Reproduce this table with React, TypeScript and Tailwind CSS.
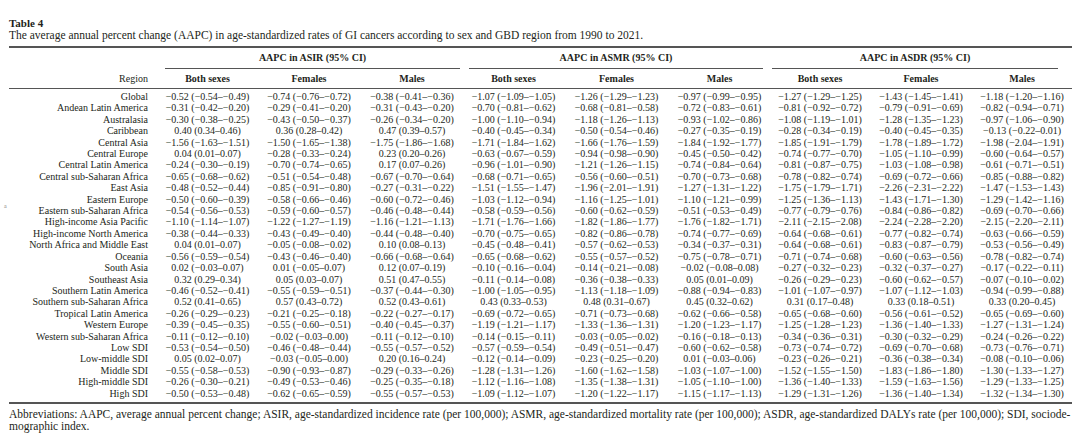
import React from "react";

const rows: [string, string][] = [
  ["Global", "-0.52 -0.54 -0.49 -0.74 -0.76 -0.72 -0.38 -0.41 -0.36 -1.07 -1.09 -1.05 -1.26 -1.29 -1.23 -0.97 -0.99 -0.95 -1.27 -1.29 -1.25 -1.43 -1.45 -1.41 -1.18 -1.20 -1.16"],
  ["Andean Latin America", "-0.31 -0.42 -0.20 -0.29 -0.41 -0.20 -0.31 -0.43 -0.20 -0.70 -0.81 -0.62 -0.68 -0.81 -0.58 -0.72 -0.83 -0.61 -0.81 -0.92 -0.72 -0.79 -0.91 -0.69 -0.82 -0.94 -0.71"],
  ["Australasia", "-0.30 -0.38 -0.25 -0.43 -0.50 -0.37 -0.26 -0.34 -0.20 -1.00 -1.10 -0.94 -1.18 -1.26 -1.13 -0.93 -1.02 -0.86 -1.08 -1.19 -1.01 -1.28 -1.35 -1.23 -0.97 -1.06 -0.90"],
  ["Caribbean", "0.40 0.34 0.46 0.36 0.28 0.42 0.47 0.39 0.57 -0.40 -0.45 -0.34 -0.50 -0.54 -0.46 -0.27 -0.35 -0.19 -0.28 -0.34 -0.19 -0.40 -0.45 -0.35 -0.13 -0.22 0.01"],
  ["Central Asia", "-1.56 -1.63 -1.51 -1.50 -1.65 -1.38 -1.75 -1.86 -1.68 -1.71 -1.84 -1.62 -1.66 -1.76 -1.59 -1.84 -1.92 -1.77 -1.85 -1.91 -1.79 -1.78 -1.89 -1.72 -1.98 -2.04 -1.91"],
  ["Central Europe", "0.04 0.01 0.07 -0.28 -0.33 -0.24 0.23 0.20 0.26 -0.63 -0.67 -0.59 -0.94 -0.98 -0.90 -0.45 -0.50 -0.42 -0.74 -0.77 -0.70 -1.05 -1.10 -0.99 -0.60 -0.64 -0.57"],
  ["Central Latin America", "-0.24 -0.30 -0.19 -0.70 -0.74 -0.65 0.17 0.07 0.26 -0.96 -1.01 -0.90 -1.21 -1.26 -1.15 -0.74 -0.84 -0.64 -0.81 -0.87 -0.75 -1.03 -1.08 -0.98 -0.61 -0.71 -0.51"],
  ["Central sub-Saharan Africa", "-0.65 -0.68 -0.62 -0.51 -0.54 -0.48 -0.67 -0.70 -0.64 -0.68 -0.71 -0.65 -0.56 -0.60 -0.51 -0.70 -0.73 -0.68 -0.78 -0.82 -0.74 -0.69 -0.72 -0.66 -0.85 -0.88 -0.82"],
  ["East Asia", "-0.48 -0.52 -0.44 -0.85 -0.91 -0.80 -0.27 -0.31 -0.22 -1.51 -1.55 -1.47 -1.96 -2.01 -1.91 -1.27 -1.31 -1.22 -1.75 -1.79 -1.71 -2.26 -2.31 -2.22 -1.47 -1.53 -1.43"],
  ["Eastern Europe", "-0.50 -0.60 -0.39 -0.58 -0.66 -0.46 -0.60 -0.72 -0.46 -1.03 -1.12 -0.94 -1.16 -1.25 -1.01 -1.10 -1.21 -0.99 -1.25 -1.36 -1.13 -1.43 -1.71 -1.30 -1.29 -1.42 -1.16"],
  ["Eastern sub-Saharan Africa", "-0.54 -0.56 -0.53 -0.59 -0.60 -0.57 -0.46 -0.48 -0.44 -0.58 -0.59 -0.56 -0.60 -0.62 -0.59 -0.51 -0.53 -0.49 -0.77 -0.79 -0.76 -0.84 -0.86 -0.82 -0.69 -0.70 -0.66"],
  ["High-income Asia Pacific", "-1.10 -1.14 -1.07 -1.22 -1.27 -1.19 -1.16 -1.21 -1.13 -1.71 -1.76 -1.66 -1.82 -1.86 -1.77 -1.76 -1.82 -1.71 -2.11 -2.15 -2.08 -2.24 -2.28 -2.20 -2.15 -2.20 -2.11"],
  ["High-income North America", "-0.38 -0.44 -0.33 -0.43 -0.49 -0.40 -0.44 -0.48 -0.40 -0.70 -0.75 -0.65 -0.82 -0.86 -0.78 -0.74 -0.77 -0.69 -0.64 -0.68 -0.61 -0.77 -0.82 -0.74 -0.63 -0.66 -0.59"],
  ["North Africa and Middle East", "0.04 0.01 0.07 -0.05 -0.08 -0.02 0.10 0.08 0.13 -0.45 -0.48 -0.41 -0.57 -0.62 -0.53 -0.34 -0.37 -0.31 -0.64 -0.68 -0.61 -0.83 -0.87 -0.79 -0.53 -0.56 -0.49"],
  ["Oceania", "-0.56 -0.59 -0.54 -0.43 -0.46 -0.40 -0.66 -0.68 -0.64 -0.65 -0.68 -0.62 -0.55 -0.57 -0.52 -0.75 -0.78 -0.71 -0.71 -0.74 -0.68 -0.60 -0.63 -0.56 -0.78 -0.82 -0.74"],
  ["South Asia", "0.02 -0.03 0.07 0.01 -0.05 0.07 0.12 0.07 0.19 -0.10 -0.16 -0.04 -0.14 -0.21 -0.08 -0.02 -0.08 0.08 -0.27 -0.32 -0.23 -0.32 -0.37 -0.27 -0.17 -0.22 -0.11"],
  ["Southeast Asia", "0.32 0.29 0.34 0.05 0.03 0.07 0.51 0.47 0.55 -0.11 -0.14 -0.08 -0.36 -0.38 -0.33 0.05 0.01 0.09 -0.26 -0.29 -0.23 -0.60 -0.62 -0.57 -0.07 -0.10 -0.02"],
  ["Southern Latin America", "-0.46 -0.52 -0.41 -0.55 -0.59 -0.51 -0.37 -0.44 -0.30 -1.00 -1.05 -0.95 -1.13 -1.18 -1.09 -0.88 -0.94 -0.83 -1.01 -1.07 -0.97 -1.07 -1.12 -1.03 -0.94 -0.99 -0.88"],
  ["Southern sub-Saharan Africa", "0.52 0.41 0.65 0.57 0.43 0.72 0.52 0.43 0.61 0.43 0.33 0.53 0.48 0.31 0.67 0.45 0.32 0.62 0.31 0.17 0.48 0.33 0.18 0.51 0.33 0.20 0.45"],
  ["Tropical Latin America", "-0.26 -0.29 -0.23 -0.21 -0.25 -0.18 -0.22 -0.27 -0.17 -0.69 -0.72 -0.65 -0.71 -0.73 -0.68 -0.62 -0.66 -0.58 -0.65 -0.68 -0.60 -0.56 -0.61 -0.52 -0.65 -0.69 -0.60"],
  ["Western Europe", "-0.39 -0.45 -0.35 -0.55 -0.60 -0.51 -0.40 -0.45 -0.37 -1.19 -1.21 -1.17 -1.33 -1.36 -1.31 -1.20 -1.23 -1.17 -1.25 -1.28 -1.23 -1.36 -1.40 -1.33 -1.27 -1.31 -1.24"],
  ["Western sub-Saharan Africa", "-0.11 -0.12 -0.10 -0.02 -0.03 0.00 -0.11 -0.12 -0.10 -0.14 -0.15 -0.11 -0.03 -0.05 -0.02 -0.16 -0.18 -0.13 -0.34 -0.36 -0.31 -0.30 -0.32 -0.29 -0.24 -0.26 -0.22"],
  ["Low SDI", "-0.53 -0.54 -0.50 -0.46 -0.48 -0.44 -0.55 -0.57 -0.52 -0.57 -0.59 -0.54 -0.49 -0.51 -0.47 -0.60 -0.62 -0.58 -0.73 -0.74 -0.72 -0.69 -0.70 -0.68 -0.73 -0.76 -0.71"],
  ["Low-middle SDI", "0.05 0.02 0.07 -0.03 -0.05 0.00 0.20 0.16 0.24 -0.12 -0.14 -0.09 -0.23 -0.25 -0.20 0.01 -0.03 0.06 -0.23 -0.26 -0.21 -0.36 -0.38 -0.34 -0.08 -0.10 -0.06"],
  ["Middle SDI", "-0.55 -0.58 -0.53 -0.90 -0.93 -0.87 -0.29 -0.33 -0.26 -1.28 -1.31 -1.26 -1.60 -1.62 -1.58 -1.03 -1.07 -1.00 -1.52 -1.55 -1.50 -1.83 -1.86 -1.80 -1.30 -1.33 -1.27"],
  ["High-middle SDI", "-0.26 -0.30 -0.21 -0.49 -0.53 -0.46 -0.25 -0.35 -0.18 -1.12 -1.16 -1.08 -1.35 -1.38 -1.31 -1.05 -1.10 -1.00 -1.36 -1.40 -1.33 -1.59 -1.63 -1.56 -1.29 -1.33 -1.25"],
  ["High SDI", "-0.50 -0.53 -0.48 -0.62 -0.65 -0.59 -0.55 -0.57 -0.53 -1.09 -1.12 -1.07 -1.20 -1.22 -1.17 -1.15 -1.17 -1.13 -1.29 -1.31 -1.26 -1.36 -1.40 -1.34 -1.32 -1.34 -1.30"],
];

const m = (s: string) => (s.startsWith("-") ? "\u2212" + s.slice(1) : s);

function cells(data: string): string[] {
  const v = data.split(" ");
  const out: string[] = [];
  for (let i = 0; i < v.length; i += 3) {
    out.push(`${m(v[i])} (${m(v[i + 1])}\u2013${m(v[i + 2])})`);
  }
  return out;
}

const sub = ["Both sexes", "Females", "Males"];

export default function App() {
  return (
    <div className="relative w-[1080px] h-[444px] overflow-hidden bg-white pl-[9px] pr-[8px] pt-[17px] font-['Liberation_Serif',serif] text-[#231f20]">
      <span className="absolute left-[4px] top-[202px] text-[6px] leading-[8px] text-[#888]">a</span>
      <div className="text-[11px] font-bold leading-[12px]">Table 4</div>
      <div className="text-[11.5px] leading-[12px] whitespace-nowrap">
        The average annual percent change (AAPC) in age-standardized rates of GI cancers according to sex and GBD region from 1990 to 2021.
      </div>
      <div className="mt-[5px] border-y-2 border-[#555]">
        <table className="w-full table-fixed border-separate border-spacing-0 text-[10px]">
          <colgroup>
            <col className="w-[149px]" />
            <col className="w-[99px]" />
            <col className="w-[104px]" />
            <col className="w-[102px]" />
            <col className="w-[101px]" />
            <col className="w-[105px]" />
            <col className="w-[101px]" />
            <col className="w-[100px]" />
            <col className="w-[102px]" />
            <col />
          </colgroup>
          <thead>
            <tr>
              <th className="p-0" />
              <th colSpan={3} className="p-0 pt-[4px] font-bold">
                <div className="ml-[7px] mr-[3px] border-b border-[#555] pb-[4px] leading-[12px]">AAPC in ASIR (95% CI)</div>
              </th>
              <th colSpan={3} className="p-0 pt-[4px] font-bold">
                <div className="ml-[6px] mr-[7px] border-b border-[#555] pb-[4px] leading-[12px]">AAPC in ASMR (95% CI)</div>
              </th>
              <th colSpan={3} className="p-0 pt-[4px] font-bold">
                <div className="ml-[2px] mr-[14px] border-b border-[#555] pb-[4px] leading-[12px]">AAPC in ASDR (95% CI)</div>
              </th>
            </tr>
            <tr>
              <th className="border-b-[1.5px] border-[#555] p-0 pb-[3px] pt-[4px] pr-[10px] text-right font-normal leading-[12px]">
                Region
              </th>
              {[0, 1, 2].flatMap((g) =>
                sub.map((s) => (
                  <th key={g + s} className="border-b-[1.5px] border-[#555] p-0 pb-[3px] pt-[4px] text-center font-bold leading-[12px]">
                    {s}
                  </th>
                ))
              )}
            </tr>
          </thead>
          <tbody>
            {rows.map(([name, data], i) => {
              const pad = i === 0 ? "pt-[2px]" : i === rows.length - 1 ? "pb-[3px]" : "";
              return (
                <tr key={name}>
                  <td className={`p-0 pr-[10px] text-right leading-[11.4px] whitespace-nowrap ${pad}`}>{name}</td>
                  {cells(data).map((c, j) => (
                    <td key={j} className={`p-0 text-center leading-[11.4px] whitespace-nowrap ${pad}`}>
                      {c}
                    </td>
                  ))}
                </tr>
              );
            })}
          </tbody>
        </table>
      </div>
      <div className="mt-[4px] text-[11.5px] leading-[12px]">
        <div className="whitespace-nowrap">
          Abbreviations: AAPC, average annual percent change; ASIR, age-standardized incidence rate (per 100,000); ASMR, age-standardized mortality rate (per 100,000); ASDR, age-standardized DALYs rate (per 100,000); SDI, sociode-
        </div>
        <div>mographic index.</div>
      </div>
    </div>
  );
}
